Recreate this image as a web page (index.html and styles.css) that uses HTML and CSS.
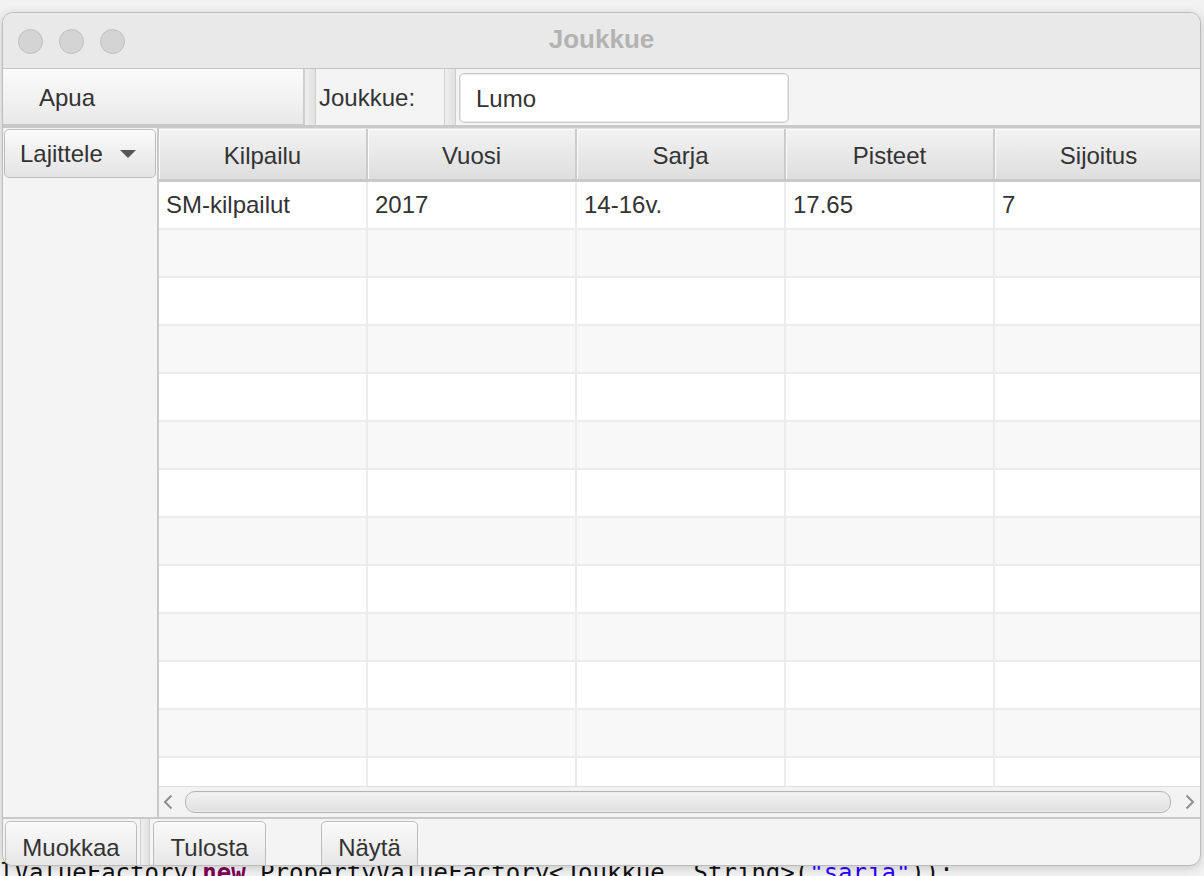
FILE: index.html
```html
<!DOCTYPE html>
<html lang="fi">
<head>
<meta charset="utf-8">
<title>Joukkue</title>
<link rel="stylesheet" href="styles.css">
</head>
<body>
<div class="desktop">
  <div class="code">lValueFactory(<span class="kw">new</span> PropertyValueFactory&lt;Joukkue, String&gt;(<span class="str">"sarja"</span>));</div>
  <div class="window">
    <div class="titlebar">
      <div class="lights">
        <span class="light"></span><span class="light"></span><span class="light"></span>
      </div>
      <div class="title">Joukkue</div>
      <div></div>
    </div>
    <div class="toolbar-top">
      <div class="menu">Apua</div>
      <div class="divider"></div>
      <div class="label">Joukkue:</div>
      <div class="divider"></div>
      <div class="field">Lumo</div>
    </div>
    <div class="main">
      <aside class="side">
        <button class="btn sort">Lajittele <span class="caret"></span></button>
      </aside>
      <div class="table">
        <div class="thead">
          <div class="th">Kilpailu</div>
          <div class="th">Vuosi</div>
          <div class="th">Sarja</div>
          <div class="th">Pisteet</div>
          <div class="th">Sijoitus</div>
        </div>
        <div class="tbody">
          <div class="tr"><div class="td">SM-kilpailut</div><div class="td">2017</div><div class="td">14-16v.</div><div class="td">17.65</div><div class="td">7</div></div>
          <div class="tr"><div class="td"></div><div class="td"></div><div class="td"></div><div class="td"></div><div class="td"></div></div>
          <div class="tr"><div class="td"></div><div class="td"></div><div class="td"></div><div class="td"></div><div class="td"></div></div>
          <div class="tr"><div class="td"></div><div class="td"></div><div class="td"></div><div class="td"></div><div class="td"></div></div>
          <div class="tr"><div class="td"></div><div class="td"></div><div class="td"></div><div class="td"></div><div class="td"></div></div>
          <div class="tr"><div class="td"></div><div class="td"></div><div class="td"></div><div class="td"></div><div class="td"></div></div>
          <div class="tr"><div class="td"></div><div class="td"></div><div class="td"></div><div class="td"></div><div class="td"></div></div>
          <div class="tr"><div class="td"></div><div class="td"></div><div class="td"></div><div class="td"></div><div class="td"></div></div>
          <div class="tr"><div class="td"></div><div class="td"></div><div class="td"></div><div class="td"></div><div class="td"></div></div>
          <div class="tr"><div class="td"></div><div class="td"></div><div class="td"></div><div class="td"></div><div class="td"></div></div>
          <div class="tr"><div class="td"></div><div class="td"></div><div class="td"></div><div class="td"></div><div class="td"></div></div>
          <div class="tr"><div class="td"></div><div class="td"></div><div class="td"></div><div class="td"></div><div class="td"></div></div>
          <div class="tr"><div class="td"></div><div class="td"></div><div class="td"></div><div class="td"></div><div class="td"></div></div>
        </div>
        <div class="hscroll">
          <svg class="arrow" width="10" height="16" viewBox="0 0 10 16"><path d="M8.5 1.5 L2 8 L8.5 14.5" fill="none" stroke="#8e8e8e" stroke-width="2"/></svg>
          <div class="thumb"></div>
          <svg class="arrow" width="10" height="16" viewBox="0 0 10 16"><path d="M1.5 1.5 L8 8 L1.5 14.5" fill="none" stroke="#8e8e8e" stroke-width="2"/></svg>
        </div>
      </div>
    </div>
    <div class="toolbar-bottom">
      <button class="btn b-muokkaa">Muokkaa</button>
      <div class="divider small"></div>
      <button class="btn b-tulosta">Tulosta</button>
      <button class="btn b-nayta">Näytä</button>
    </div>
  </div>
</div>
</body>
</html>
```

FILE: styles.css
```css
* { box-sizing: border-box; }

body {
  margin: 0;
  width: 1204px;
  height: 876px;
  overflow: hidden;
  background: #f1f1f1;
  font-family: "Liberation Sans", Arial, sans-serif;
}

.desktop {
  position: relative;
  width: 1204px;
  height: 876px;
  background: #f2f2f2;
  overflow: hidden;
}

.code {
  position: absolute;
  left: 0;
  top: 861px;
  font: 24px/24px "DejaVu Sans Mono", monospace;
  color: #111;
  white-space: pre;
}
.code .kw { color: #7f0055; font-weight: bold; }
.code .str { color: #2a00ff; }

.window {
  position: absolute;
  left: 2px;
  top: 12px;
  width: 1199px;
  height: 854px;
  border: 1px solid #bcbcbc;
  border-radius: 11px;
  overflow: hidden;
  background: #f4f4f4;
  box-shadow: 0 2px 10px rgba(0, 0, 0, 0.18);
  display: flex;
  flex-direction: column;
  font-size: 24px;
  color: #333;
}

/* title bar */
.titlebar {
  flex: none;
  height: 56px;
  background: #e9e9e9;
  border-bottom: 1px solid #c6c6c6;
  display: grid;
  grid-template-columns: 1fr auto 1fr;
  align-items: center;
}
.lights {
  display: flex;
  gap: 16px;
  padding-left: 15px;
  padding-top: 1px;
}
.light {
  width: 25px;
  height: 25px;
  border-radius: 50%;
  background: #d4d4d4;
  border: 1px solid #bfbfbf;
}
.title {
  font-weight: bold;
  font-size: 26px;
  color: #b3b3b3;
  padding-bottom: 3px;
}

/* top toolbar */
.toolbar-top {
  flex: none;
  height: 59px;
  display: flex;
  border-bottom: 3px solid #c9c9c9;
}
.menu {
  width: 301px;
  display: flex;
  align-items: center;
  padding-left: 36px;
  padding-top: 2px;
  background: linear-gradient(#fbfbfb, #e9e9e9);
  border-right: 1px solid #cdcdcd;
  border-bottom: 1px solid #c8c8c8;
}
.divider {
  width: 12px;
  flex: none;
  background: linear-gradient(to right, #cfcfcf 0 1px, #efefef 1px, #e0e0e0 calc(100% - 1px), #cfcfcf calc(100% - 1px));
}
.label {
  width: 128px;
  display: flex;
  align-items: center;
  padding-left: 3px;
  padding-top: 2px;
}
.field {
  margin: 4px 0 2px 3px;
  width: 330px;
  background: #fff;
  border: 1px solid #c9c9c9;
  border-radius: 5px;
  box-shadow: inset 0 0 0 1px #ececec;
  display: flex;
  align-items: center;
  padding-left: 16px;
  padding-top: 1px;
}

/* main */
.main {
  flex: none;
  height: 691px;
  display: flex;
  border-bottom: 2px solid #c9c9c9;
}
.side {
  width: 156px;
  flex: none;
  border-right: 2px solid #c9c9c9;
  padding: 1px 0 0 1px;
  background: #f4f4f4;
}

.btn {
  font: inherit;
  color: #333;
  background: linear-gradient(#fafafa, #e4e4e4);
  border: 1px solid #bdbdbd;
  border-radius: 5px;
  box-shadow: inset 0 1px 0 #ffffff;
  padding: 0;
  display: flex;
  align-items: center;
  justify-content: center;
}
.sort {
  width: 152px;
  height: 49px;
  justify-content: flex-start;
  padding-left: 15px;
  gap: 17px;
}
.caret {
  width: 0;
  height: 0;
  border-left: 8px solid transparent;
  border-right: 8px solid transparent;
  border-top: 8px solid #555;
}

.table {
  flex: 1;
  min-width: 0;
  display: flex;
  flex-direction: column;
  overflow: hidden;
  background: #fff;
}
.thead {
  flex: none;
  height: 54px;
  display: flex;
  border-top: 1px solid #e2e2e2;
  border-bottom: 3px solid #c9c9c9;
  background: #f4f4f4;
}
.th {
  flex: none;
  width: 209px;
  display: flex;
  align-items: center;
  justify-content: center;
  padding-top: 4px;
  background: linear-gradient(#f3f3f3, #dedede);
  border-right: 2px solid #cbcbcb;
  box-shadow: inset 1px 1px 0 #fbfbfb;
}
.tbody {
  flex: none;
  height: 604px;
  overflow: hidden;
}
.tr {
  height: 48px;
  display: flex;
  border-bottom: 2px solid #ececec;
  background: #fff;
}
.tr:nth-child(even) { background: #f8f8f8; }
.td {
  flex: none;
  width: 209px;
  border-right: 2px solid #ececec;
  display: flex;
  align-items: center;
  padding-left: 7px;
  white-space: nowrap;
}

.hscroll {
  flex: none;
  height: 31px;
  background: #f3f3f3;
  border-top: 1px solid #dedede;
  display: flex;
  align-items: center;
  padding: 0 5px 0 4px;
}
.arrow { flex: none; }
.thumb {
  flex: 1;
  height: 22px;
  margin: 0 14px 0 12px;
  border: 1px solid #b4b4b4;
  border-radius: 10px;
  background: linear-gradient(#f2f2f2, #e0e0e0);
  box-shadow: inset 0 0 0 1px #ececec;
}

/* bottom toolbar */
.toolbar-bottom {
  flex: none;
  height: 47px;
  display: flex;
  align-items: flex-start;
  padding: 2px 0 0 2px;
  overflow: hidden;
}
.toolbar-bottom .btn {
  height: 52px;
  flex: none;
  padding-top: 1px;
}
.toolbar-bottom .divider.small {
  width: 10px;
  height: 47px;
  margin: -2px 3px 0 3px;
}
.b-muokkaa { width: 132px; }
.b-tulosta { width: 113px; }
.b-nayta { width: 97px; margin-left: 55px; }
```
